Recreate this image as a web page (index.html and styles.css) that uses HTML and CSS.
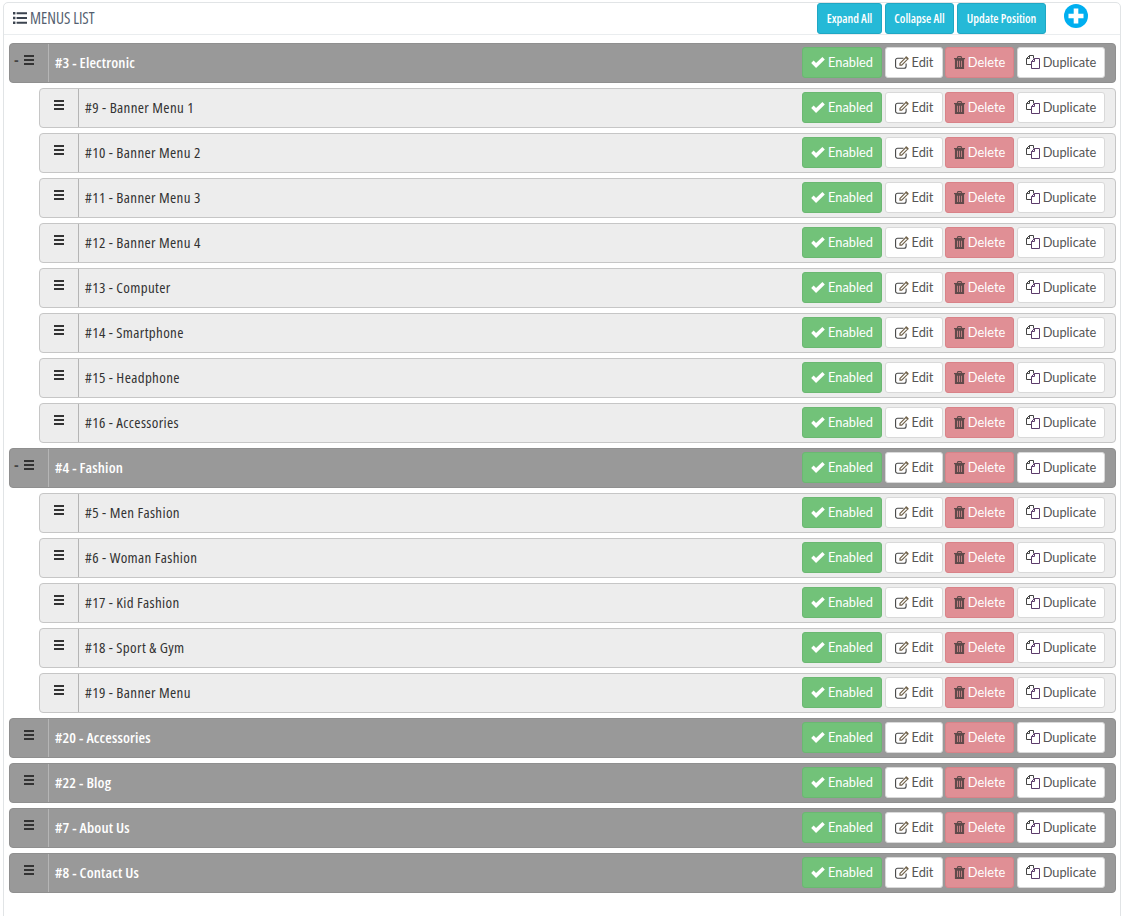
FILE: index.html
```html
<!DOCTYPE html>
<html lang="en">
<head>
<meta charset="utf-8">
<title>Menus list</title>
<link rel="stylesheet" href="styles.css">
</head>
<body>
<svg class="defs" width="0" height="0" aria-hidden="true">
  <symbol id="i-list" viewBox="0 0 14 12"><path fill="currentColor" d="M0 0h2.4v2.4H0zM0 4.8h2.4v2.4H0zM0 9.6h2.4V12H0zM3.6.3H14v1.9H3.6zM3.6 5H14v2H3.6zM3.6 9.8H14v1.9H3.6z"/></symbol>
  <symbol id="i-bars" viewBox="0 0 10 10"><path fill="currentColor" d="M0 0h10v2H0zM0 4h10v2H0zM0 8h10v2H0z"/></symbol>
  <symbol id="i-check" viewBox="0 0 14 11.300"><path fill="currentColor" d="M0 6.200 2.500 3.700 5 6.100 11.500 0 14 2.500 5 11.300z"/></symbol>
  <symbol id="i-edit" viewBox="0 0 14 13"><path fill="none" stroke="currentColor" stroke-width="1.100" d="M8.500 2.300H2.600A2 2 0 0 0 .6 4.300v6a2 2 0 0 0 2 2h6.500a2 2 0 0 0 2-2V7.500"/><path fill="none" stroke="#6f6048" stroke-width="1.200" d="M5 7.400 11 1.400l1.700 1.700-6 6H5z"/><path fill="#6f6048" d="M10.400 1 11.400.3 13.700 2.600 13 3.600z"/></symbol>
  <symbol id="i-trash" viewBox="0 0 12 14"><path fill="currentColor" d="M4 0h4l1 2h3v1.400h-1V14H1V3.400H0V2h3zM4.700 1.200 4.300 2h3.400l-.4-.8zM3.500 5v7h.8V5zM5.600 5v7h.8V5zM7.700 5v7h.8V5z"/></symbol>
  <symbol id="i-copy" viewBox="0 0 14 14"><path fill="none" stroke="currentColor" stroke-width="1" d="M5.500 9.500H.5V3.500l3-3h4v3M3.500.5v3h-3"/><path fill="none" stroke="#5b3a6b" stroke-width="1" d="M8.500 3.500h5v10h-8V6.500zM8.500 3.500v3h-3"/></symbol>
  <symbol id="i-plus" viewBox="0 0 24 24"><circle cx="12" cy="12" r="12" fill="currentColor"/><path fill="#fff" d="M9.700 4.500h4.600v5.200h5.200v4.600h-5.200v5.200H9.700v-5.200H4.500V9.700h5.200z"/></symbol>
</svg>
<main class="panel">
  <header class="panel-head">
    <h1 class="panel-title"><svg class="ico ico-list"><use href="#i-list"/></svg>MENUS LIST</h1>
    <div class="head-actions">
      <button class="head-btn">Expand All</button>
      <button class="head-btn">Collapse All</button>
      <button class="head-btn">Update Position</button>
      <button class="add-btn" aria-label="Add"><svg class="ico ico-plus"><use href="#i-plus"/></svg></button>
    </div>
  </header>
  <ol class="tree" id="tree">
    <li>
      <div class="row top"><div class="handle"><span class="minus">-</span><svg class="ico ico-bars"><use href="#i-bars"/></svg></div><div class="name">#3 - Electronic</div><div class="acts"><button class="btn on"><svg class="ico ico-check"><use href="#i-check"/></svg>Enabled</button><button class="btn plain edit"><svg class="ico ico-edit"><use href="#i-edit"/></svg>Edit</button><button class="btn del"><svg class="ico ico-trash"><use href="#i-trash"/></svg>Delete</button><button class="btn plain dup"><svg class="ico ico-copy"><use href="#i-copy"/></svg>Duplicate</button></div></div>
      <ol class="sub">
        <li><div class="row"><div class="handle"><svg class="ico ico-bars"><use href="#i-bars"/></svg></div><div class="name">#9 - Banner Menu 1</div><div class="acts"><button class="btn on"><svg class="ico ico-check"><use href="#i-check"/></svg>Enabled</button><button class="btn plain edit"><svg class="ico ico-edit"><use href="#i-edit"/></svg>Edit</button><button class="btn del"><svg class="ico ico-trash"><use href="#i-trash"/></svg>Delete</button><button class="btn plain dup"><svg class="ico ico-copy"><use href="#i-copy"/></svg>Duplicate</button></div></div></li>
        <li><div class="row"><div class="handle"><svg class="ico ico-bars"><use href="#i-bars"/></svg></div><div class="name">#10 - Banner Menu 2</div><div class="acts"><button class="btn on"><svg class="ico ico-check"><use href="#i-check"/></svg>Enabled</button><button class="btn plain edit"><svg class="ico ico-edit"><use href="#i-edit"/></svg>Edit</button><button class="btn del"><svg class="ico ico-trash"><use href="#i-trash"/></svg>Delete</button><button class="btn plain dup"><svg class="ico ico-copy"><use href="#i-copy"/></svg>Duplicate</button></div></div></li>
        <li><div class="row"><div class="handle"><svg class="ico ico-bars"><use href="#i-bars"/></svg></div><div class="name">#11 - Banner Menu 3</div><div class="acts"><button class="btn on"><svg class="ico ico-check"><use href="#i-check"/></svg>Enabled</button><button class="btn plain edit"><svg class="ico ico-edit"><use href="#i-edit"/></svg>Edit</button><button class="btn del"><svg class="ico ico-trash"><use href="#i-trash"/></svg>Delete</button><button class="btn plain dup"><svg class="ico ico-copy"><use href="#i-copy"/></svg>Duplicate</button></div></div></li>
        <li><div class="row"><div class="handle"><svg class="ico ico-bars"><use href="#i-bars"/></svg></div><div class="name">#12 - Banner Menu 4</div><div class="acts"><button class="btn on"><svg class="ico ico-check"><use href="#i-check"/></svg>Enabled</button><button class="btn plain edit"><svg class="ico ico-edit"><use href="#i-edit"/></svg>Edit</button><button class="btn del"><svg class="ico ico-trash"><use href="#i-trash"/></svg>Delete</button><button class="btn plain dup"><svg class="ico ico-copy"><use href="#i-copy"/></svg>Duplicate</button></div></div></li>
        <li><div class="row"><div class="handle"><svg class="ico ico-bars"><use href="#i-bars"/></svg></div><div class="name">#13 - Computer</div><div class="acts"><button class="btn on"><svg class="ico ico-check"><use href="#i-check"/></svg>Enabled</button><button class="btn plain edit"><svg class="ico ico-edit"><use href="#i-edit"/></svg>Edit</button><button class="btn del"><svg class="ico ico-trash"><use href="#i-trash"/></svg>Delete</button><button class="btn plain dup"><svg class="ico ico-copy"><use href="#i-copy"/></svg>Duplicate</button></div></div></li>
        <li><div class="row"><div class="handle"><svg class="ico ico-bars"><use href="#i-bars"/></svg></div><div class="name">#14 - Smartphone</div><div class="acts"><button class="btn on"><svg class="ico ico-check"><use href="#i-check"/></svg>Enabled</button><button class="btn plain edit"><svg class="ico ico-edit"><use href="#i-edit"/></svg>Edit</button><button class="btn del"><svg class="ico ico-trash"><use href="#i-trash"/></svg>Delete</button><button class="btn plain dup"><svg class="ico ico-copy"><use href="#i-copy"/></svg>Duplicate</button></div></div></li>
        <li><div class="row"><div class="handle"><svg class="ico ico-bars"><use href="#i-bars"/></svg></div><div class="name">#15 - Headphone</div><div class="acts"><button class="btn on"><svg class="ico ico-check"><use href="#i-check"/></svg>Enabled</button><button class="btn plain edit"><svg class="ico ico-edit"><use href="#i-edit"/></svg>Edit</button><button class="btn del"><svg class="ico ico-trash"><use href="#i-trash"/></svg>Delete</button><button class="btn plain dup"><svg class="ico ico-copy"><use href="#i-copy"/></svg>Duplicate</button></div></div></li>
        <li><div class="row"><div class="handle"><svg class="ico ico-bars"><use href="#i-bars"/></svg></div><div class="name">#16 - Accessories</div><div class="acts"><button class="btn on"><svg class="ico ico-check"><use href="#i-check"/></svg>Enabled</button><button class="btn plain edit"><svg class="ico ico-edit"><use href="#i-edit"/></svg>Edit</button><button class="btn del"><svg class="ico ico-trash"><use href="#i-trash"/></svg>Delete</button><button class="btn plain dup"><svg class="ico ico-copy"><use href="#i-copy"/></svg>Duplicate</button></div></div></li>
      </ol>
    </li>
    <li>
      <div class="row top"><div class="handle"><span class="minus">-</span><svg class="ico ico-bars"><use href="#i-bars"/></svg></div><div class="name">#4 - Fashion</div><div class="acts"><button class="btn on"><svg class="ico ico-check"><use href="#i-check"/></svg>Enabled</button><button class="btn plain edit"><svg class="ico ico-edit"><use href="#i-edit"/></svg>Edit</button><button class="btn del"><svg class="ico ico-trash"><use href="#i-trash"/></svg>Delete</button><button class="btn plain dup"><svg class="ico ico-copy"><use href="#i-copy"/></svg>Duplicate</button></div></div>
      <ol class="sub">
        <li><div class="row"><div class="handle"><svg class="ico ico-bars"><use href="#i-bars"/></svg></div><div class="name">#5 - Men Fashion</div><div class="acts"><button class="btn on"><svg class="ico ico-check"><use href="#i-check"/></svg>Enabled</button><button class="btn plain edit"><svg class="ico ico-edit"><use href="#i-edit"/></svg>Edit</button><button class="btn del"><svg class="ico ico-trash"><use href="#i-trash"/></svg>Delete</button><button class="btn plain dup"><svg class="ico ico-copy"><use href="#i-copy"/></svg>Duplicate</button></div></div></li>
        <li><div class="row"><div class="handle"><svg class="ico ico-bars"><use href="#i-bars"/></svg></div><div class="name">#6 - Woman Fashion</div><div class="acts"><button class="btn on"><svg class="ico ico-check"><use href="#i-check"/></svg>Enabled</button><button class="btn plain edit"><svg class="ico ico-edit"><use href="#i-edit"/></svg>Edit</button><button class="btn del"><svg class="ico ico-trash"><use href="#i-trash"/></svg>Delete</button><button class="btn plain dup"><svg class="ico ico-copy"><use href="#i-copy"/></svg>Duplicate</button></div></div></li>
        <li><div class="row"><div class="handle"><svg class="ico ico-bars"><use href="#i-bars"/></svg></div><div class="name">#17 - Kid Fashion</div><div class="acts"><button class="btn on"><svg class="ico ico-check"><use href="#i-check"/></svg>Enabled</button><button class="btn plain edit"><svg class="ico ico-edit"><use href="#i-edit"/></svg>Edit</button><button class="btn del"><svg class="ico ico-trash"><use href="#i-trash"/></svg>Delete</button><button class="btn plain dup"><svg class="ico ico-copy"><use href="#i-copy"/></svg>Duplicate</button></div></div></li>
        <li><div class="row"><div class="handle"><svg class="ico ico-bars"><use href="#i-bars"/></svg></div><div class="name">#18 - Sport &amp; Gym</div><div class="acts"><button class="btn on"><svg class="ico ico-check"><use href="#i-check"/></svg>Enabled</button><button class="btn plain edit"><svg class="ico ico-edit"><use href="#i-edit"/></svg>Edit</button><button class="btn del"><svg class="ico ico-trash"><use href="#i-trash"/></svg>Delete</button><button class="btn plain dup"><svg class="ico ico-copy"><use href="#i-copy"/></svg>Duplicate</button></div></div></li>
        <li><div class="row"><div class="handle"><svg class="ico ico-bars"><use href="#i-bars"/></svg></div><div class="name">#19 - Banner Menu</div><div class="acts"><button class="btn on"><svg class="ico ico-check"><use href="#i-check"/></svg>Enabled</button><button class="btn plain edit"><svg class="ico ico-edit"><use href="#i-edit"/></svg>Edit</button><button class="btn del"><svg class="ico ico-trash"><use href="#i-trash"/></svg>Delete</button><button class="btn plain dup"><svg class="ico ico-copy"><use href="#i-copy"/></svg>Duplicate</button></div></div></li>
      </ol>
    </li>
    <li><div class="row top"><div class="handle"><svg class="ico ico-bars"><use href="#i-bars"/></svg></div><div class="name">#20 - Accessories</div><div class="acts"><button class="btn on"><svg class="ico ico-check"><use href="#i-check"/></svg>Enabled</button><button class="btn plain edit"><svg class="ico ico-edit"><use href="#i-edit"/></svg>Edit</button><button class="btn del"><svg class="ico ico-trash"><use href="#i-trash"/></svg>Delete</button><button class="btn plain dup"><svg class="ico ico-copy"><use href="#i-copy"/></svg>Duplicate</button></div></div></li>
    <li><div class="row top"><div class="handle"><svg class="ico ico-bars"><use href="#i-bars"/></svg></div><div class="name">#22 - Blog</div><div class="acts"><button class="btn on"><svg class="ico ico-check"><use href="#i-check"/></svg>Enabled</button><button class="btn plain edit"><svg class="ico ico-edit"><use href="#i-edit"/></svg>Edit</button><button class="btn del"><svg class="ico ico-trash"><use href="#i-trash"/></svg>Delete</button><button class="btn plain dup"><svg class="ico ico-copy"><use href="#i-copy"/></svg>Duplicate</button></div></div></li>
    <li><div class="row top"><div class="handle"><svg class="ico ico-bars"><use href="#i-bars"/></svg></div><div class="name">#7 - About Us</div><div class="acts"><button class="btn on"><svg class="ico ico-check"><use href="#i-check"/></svg>Enabled</button><button class="btn plain edit"><svg class="ico ico-edit"><use href="#i-edit"/></svg>Edit</button><button class="btn del"><svg class="ico ico-trash"><use href="#i-trash"/></svg>Delete</button><button class="btn plain dup"><svg class="ico ico-copy"><use href="#i-copy"/></svg>Duplicate</button></div></div></li>
    <li><div class="row top"><div class="handle"><svg class="ico ico-bars"><use href="#i-bars"/></svg></div><div class="name">#8 - Contact Us</div><div class="acts"><button class="btn on"><svg class="ico ico-check"><use href="#i-check"/></svg>Enabled</button><button class="btn plain edit"><svg class="ico ico-edit"><use href="#i-edit"/></svg>Edit</button><button class="btn del"><svg class="ico ico-trash"><use href="#i-trash"/></svg>Delete</button><button class="btn plain dup"><svg class="ico ico-copy"><use href="#i-copy"/></svg>Duplicate</button></div></div></li>
  </ol>
</main>
</body>
</html>
```
FILE: styles.css
```css
* { box-sizing: border-box; }
html, body { margin: 0; padding: 0; height: 916px; overflow: hidden; background: #fff; }
body { padding: 2px 3px 0; font-family: "Lato", "Liberation Sans", sans-serif; color: #555; }
.defs { display: block; height: 0; }
.panel { height: 930px; background: #fff; border: 1px solid #e1e4e6; border-radius: 5px; }

.panel-head { display: flex; justify-content: space-between; height: 32px; border-bottom: 1px solid #eaedef; padding: 0 32px 0 9px; }
.panel-title { display: flex; align-items: center; margin: 0 0 2px; font: 400 condensed 15.5px "Open Sans", "DejaVu Sans Condensed", sans-serif; color: #555f70; }
.ico { display: inline-block; flex: none; }
.ico-list { width: 14px; height: 12px; margin-right: 3px; color: #3c4450; }
.head-actions { display: flex; align-items: flex-start; gap: 3px; }
.head-btn { height: 31px; padding: 0; white-space: nowrap; border: 1px solid #1fa7c4; border-radius: 3px; background: #25b9d7; color: #fff; font: 600 condensed 12px "Open Sans", "DejaVu Sans Condensed", sans-serif; }
.head-btn:nth-child(1) { width: 65px; }
.head-btn:nth-child(2) { width: 69px; }
.head-btn:nth-child(3) { width: 89px; }
.add-btn { display: flex; align-items: center; justify-content: center; width: 24px; height: 24px; margin: 1px 0 0 15px; padding: 0; border: 0; background: none; }
.ico-plus { width: 24px; height: 24px; color: #00aff0; }

.tree, .sub { list-style: none; margin: 0; padding: 0; }
.tree { padding: 8px 4px 0 5px; }
.sub { padding-left: 30px; }

.row { display: flex; align-items: center; height: 40px; margin-bottom: 5px; background: #ededed; border: 1px solid #c6c6c6; border-radius: 4px; padding-right: 10px; }
.row.top { background: #999; border-color: #8f8f8f; }
.handle { display: flex; align-items: flex-start; justify-content: center; position: relative; align-self: stretch; width: 39px; padding-top: 11px; border-right: 1px solid #b5b5b5; color: #333; }
.minus { position: absolute; left: 4px; top: 8px; font: 700 14px "Liberation Sans", sans-serif; color: #444; }
.ico-bars { width: 10px; height: 10px; }
.name { flex: 1; padding: 0 0 2px 6px; font: 400 condensed 15px "Open Sans", "DejaVu Sans Condensed", sans-serif; letter-spacing: .35px; color: #333; }
.row.top .name { color: #fff; font-weight: 600; letter-spacing: .15px; }

.acts { display: flex; align-items: center; gap: 3px; padding-bottom: 1px; }
.btn { display: flex; align-items: center; justify-content: center; height: 31px; padding: 0 0 1px; border: 1px solid transparent; border-radius: 3px; font: 400 12.8px "Lato", "Liberation Sans", sans-serif; }
.on { width: 80px; background: #72c279; border-color: #6bb872; color: #fff; }
.del { width: 69px; background: #e08f95; border-color: #d98288; color: #fff; margin-left: -1px; }
.plain { background: #fff; border-color: #d9d9d9; color: #555; }
.edit { width: 58px; }
.dup { width: 88px; }
.ico-check { width: 14px; height: 11px; margin-right: 3px; }
.ico-edit { width: 14px; height: 13px; margin-right: 3px; color: #444; }
.ico-trash { width: 11px; height: 13px; margin-right: 3px; color: #5f4a4a; }
.ico-copy { width: 14px; height: 14px; margin-right: 3px; color: #444; }
```
